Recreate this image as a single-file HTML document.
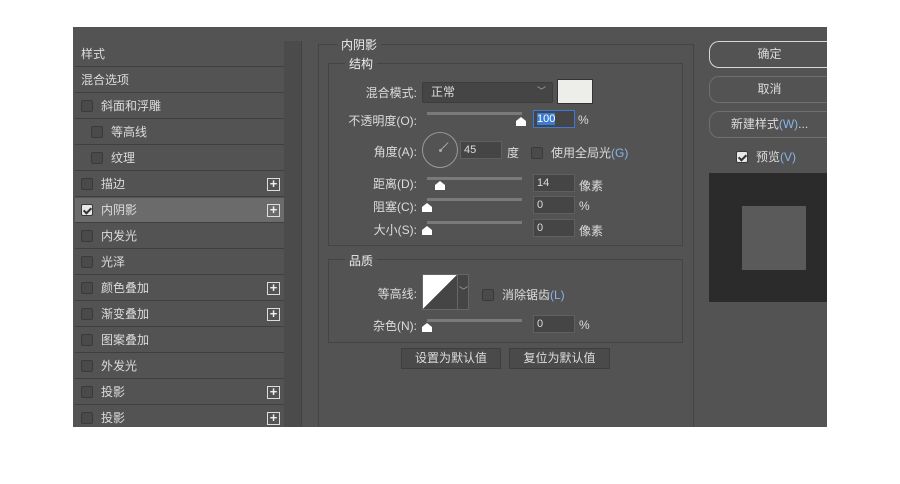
<!DOCTYPE html><html><head><meta charset="utf-8"><style>
*{box-sizing:border-box;margin:0;padding:0}
body{width:900px;height:484px;background:#fff;position:relative;overflow:hidden;font-family:"Liberation Sans","Noto Sans CJK SC",sans-serif;font-size:12px;color:#dcdcdc}
.dlg{position:absolute;left:73px;top:27px;width:754px;height:400px;background:#535353;overflow:hidden}
.a{position:absolute}
.row{position:absolute;left:2px;width:209px;height:25px;background:#535353;border-bottom:1px solid #3f3f3f;line-height:25px;padding-left:6px;white-space:nowrap}
.cb{display:inline-block;width:12px;height:12px;border:1px solid #3a3a3a;background:#4a4a4a;border-radius:2px;vertical-align:-2px;margin-right:8px}
.cb.on{background:#e8e8e8;position:relative}
.cb.on:after{content:"";position:absolute;left:3px;top:1px;width:3px;height:6px;border:solid #333;border-width:0 2px 2px 0;transform:rotate(45deg)}
.plus{position:absolute;right:4px;top:6px;width:13px;height:13px;border:1px solid #ddd;font-size:13px;line-height:10px;text-align:center;color:#eee;font-weight:bold}
.fs{position:absolute;border:1px solid #444}
.lg{position:absolute;background:#535353;padding:0 4px;font-size:12px;color:#eee}
.lbl{position:absolute;text-align:right;width:102px}
.inp{position:absolute;height:18px;background:#454545;border:1px solid #5f5f5f;line-height:16px;padding-left:3px;font-size:11px}
.trk{position:absolute;height:3px;background:#7a7a7a;width:95px}
.th{position:absolute;width:10px;height:9px;background:#fff;clip-path:polygon(50% 0,100% 45%,100% 100%,0 100%,0 45%)}
.btn{position:absolute;border:1px solid #6f6f6f;border-radius:10px 0 0 10px;text-align:center;line-height:25px;font-size:12px;height:27px;border-right:none}
.blu{color:#8ab4e8}
</style></head><body>
<div class="dlg">
<div class="a" style="left:211px;top:14px;width:17px;height:386px;background:#4b4b4b"></div>
<div class="a" style="left:228px;top:14px;width:1px;height:386px;background:#424242"></div>
<div class="row" style="top:15px">样式</div>
<div class="row" style="top:41px">混合选项</div>
<div class="row" style="top:67px"><span class="cb"></span>斜面和浮雕</div>
<div class="row" style="top:93px;padding-left:16px"><span class="cb"></span>等高线</div>
<div class="row" style="top:119px;padding-left:16px"><span class="cb"></span>纹理</div>
<div class="row" style="top:145px"><span class="cb"></span>描边<span class="plus">+</span></div>
<div class="row" style="top:171px;background:#6b6b6b"><span class="cb on"></span>内阴影<span class="plus">+</span></div>
<div class="row" style="top:197px"><span class="cb"></span>内发光</div>
<div class="row" style="top:223px"><span class="cb"></span>光泽</div>
<div class="row" style="top:249px"><span class="cb"></span>颜色叠加<span class="plus">+</span></div>
<div class="row" style="top:275px"><span class="cb"></span>渐变叠加<span class="plus">+</span></div>
<div class="row" style="top:301px"><span class="cb"></span>图案叠加</div>
<div class="row" style="top:327px"><span class="cb"></span>外发光</div>
<div class="row" style="top:353px"><span class="cb"></span>投影<span class="plus">+</span></div>
<div class="row" style="top:379px"><span class="cb"></span>投影<span class="plus">+</span></div>

<div class="fs" style="left:245px;top:17px;width:376px;height:400px"></div>
<div class="lg" style="left:264px;top:9px">内阴影</div>
<div class="fs" style="left:255px;top:36px;width:355px;height:183px"></div>
<div class="lg" style="left:272px;top:28px">结构</div>
<div class="lbl" style="left:242px;top:57px">混合模式:</div>
<div class="a" style="left:349px;top:55px;width:131px;height:21px;background:#454545;border:1px solid #3c3c3c;border-radius:2px;line-height:19px;padding-left:8px">正常<span style="position:absolute;right:6px;top:-1px;font-size:9px;color:#aaa">﹀</span></div>
<div class="a" style="left:484px;top:52px;width:36px;height:25px;background:#ededea;border:1px solid #333"></div>
<div class="lbl" style="left:242px;top:85px">不透明度(O):</div>
<div class="trk" style="left:354px;top:85px"></div><div class="th" style="left:443px;top:90px"></div>
<div class="inp" style="left:460px;top:83px;width:42px;border:1px solid #3a7bd5"><span style="background:#3a7bd5;color:#fff">100</span></div>
<div class="a" style="left:505px;top:86px">%</div>
<div class="lbl" style="left:242px;top:116px">角度(A):</div>
<div class="a" style="left:349px;top:105px;width:36px;height:36px;border:1px solid #999;border-radius:50%"></div>
<div class="a" style="left:366px;top:122px;width:3px;height:3px;background:#aaa;border-radius:50%"></div>
<div class="a" style="left:367px;top:123px;width:11px;height:1px;background:#aaa;transform:rotate(-45deg);transform-origin:0 0"></div>
<div class="inp" style="left:387px;top:114px;width:42px">45</div>
<div class="a" style="left:434px;top:117px">度</div>
<div class="a" style="left:458px;top:117px"><span class="cb"></span>使用全局光<span class="blu">(G)</span></div>
<div class="lbl" style="left:242px;top:148px">距离(D):</div>
<div class="trk" style="left:354px;top:150px"></div><div class="th" style="left:362px;top:154px"></div>
<div class="inp" style="left:460px;top:147px;width:42px">14</div><div class="a" style="left:506px;top:150px">像素</div>
<div class="lbl" style="left:242px;top:171px">阻塞(C):</div>
<div class="trk" style="left:354px;top:171px"></div><div class="th" style="left:349px;top:176px"></div>
<div class="inp" style="left:460px;top:169px;width:42px">0</div><div class="a" style="left:506px;top:172px">%</div>
<div class="lbl" style="left:242px;top:194px">大小(S):</div>
<div class="trk" style="left:354px;top:194px"></div><div class="th" style="left:349px;top:199px"></div>
<div class="inp" style="left:460px;top:192px;width:42px">0</div><div class="a" style="left:506px;top:195px">像素</div>

<div class="fs" style="left:255px;top:232px;width:355px;height:84px"></div>
<div class="lg" style="left:272px;top:225px">品质</div>
<div class="lbl" style="left:242px;top:258px">等高线:</div>
<div class="a" style="left:349px;top:247px;width:47px;height:36px;border:1px solid #666;background:#454545"></div>
<div class="a" style="left:350px;top:248px;width:34px;height:34px;background:linear-gradient(to bottom right,#fff 50%,#454545 50%)"></div>
<div class="a" style="left:384px;top:248px;width:1px;height:34px;background:#666"></div>
<div class="a" style="left:386px;top:257px;font-size:9px;color:#aaa">﹀</div>
<div class="a" style="left:409px;top:259px"><span class="cb"></span>消除锯齿<span class="blu">(L)</span></div>
<div class="lbl" style="left:242px;top:290px">杂色(N):</div>
<div class="trk" style="left:354px;top:292px"></div><div class="th" style="left:349px;top:296px"></div>
<div class="inp" style="left:460px;top:288px;width:42px">0</div><div class="a" style="left:506px;top:291px">%</div>
<div class="a" style="left:328px;top:321px;width:100px;height:21px;border:1px solid #3e3e3e;background:#4a4a4a;text-align:center;line-height:19px">设置为默认值</div>
<div class="a" style="left:436px;top:321px;width:101px;height:21px;border:1px solid #3e3e3e;background:#4a4a4a;text-align:center;line-height:19px">复位为默认值</div>

<div class="btn" style="left:636px;top:14px;width:120px;border-color:#d8d8d8">确定</div>
<div class="btn" style="left:636px;top:49px;width:120px">取消</div>
<div class="btn" style="left:636px;top:84px;width:120px">新建样式<span class="blu">(W)</span>...</div>
<div class="a" style="left:663px;top:121px"><span class="cb on"></span>预览<span class="blu">(V)</span></div>
<div class="a" style="left:636px;top:146px;width:118px;height:129px;background:#2b2b2b"></div>
<div class="a" style="left:669px;top:179px;width:64px;height:64px;background:#5a5a5a"></div>
</div>
</body></html>
